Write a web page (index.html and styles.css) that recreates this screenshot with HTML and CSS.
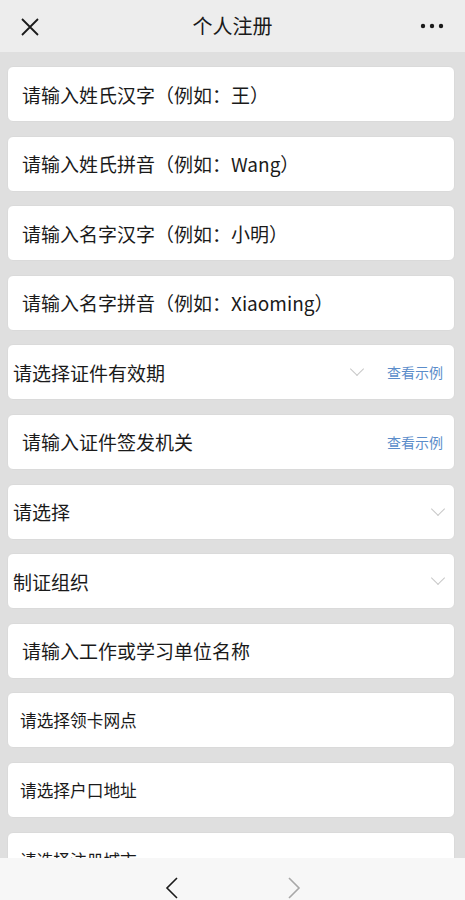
FILE: index.html
```html
<!DOCTYPE html>
<html lang="zh-CN">
<head>
    <meta charset="UTF-8">
    <meta name="viewport" content="width=device-width, initial-scale=1.0">
    <title>个人注册</title>
    <link rel="stylesheet" href="styles.css">
</head>
<body>
    <header class="top-bar">
        <span class="top-icon close-icon">
            <svg width="18" height="18" viewBox="0 0 18 18"><path d="M1 1 L17 17 M17 1 L1 17" stroke="#1a1a1a" stroke-width="1.8" fill="none"/></svg>
        </span>
        <h1 class="page-title">个人注册</h1>
        <span class="top-icon more-icon">
            <svg width="24" height="6" viewBox="0 0 24 6"><circle cx="3" cy="3" r="2.2" fill="#1a1a1a"/><circle cx="12" cy="3" r="2.2" fill="#1a1a1a"/><circle cx="21" cy="3" r="2.2" fill="#1a1a1a"/></svg>
        </span>
    </header>

    <main class="form-list">
        <div class="field"><span class="field-text">请输入姓氏汉字（例如：王）</span></div>
        <div class="field"><span class="field-text">请输入姓氏拼音（例如：Wang）</span></div>
        <div class="field"><span class="field-text">请输入名字汉字（例如：小明）</span></div>
        <div class="field"><span class="field-text">请输入名字拼音（例如：Xiaoming）</span></div>

        <div class="field select">
            <span class="field-text">请选择证件有效期</span>
            <span class="chevron chevron-mid"></span>
            <a class="example-link">查看示例</a>
        </div>
        <div class="field">
            <span class="field-text">请输入证件签发机关</span>
            <a class="example-link">查看示例</a>
        </div>

        <div class="field select">
            <span class="field-text">请选择</span>
            <span class="chevron"></span>
        </div>
        <div class="field select">
            <span class="field-text">制证组织</span>
            <span class="chevron"></span>
        </div>

        <div class="field"><span class="field-text">请输入工作或学习单位名称</span></div>
        <div class="field small"><span class="field-text">请选择领卡网点</span></div>
        <div class="field small"><span class="field-text">请选择户口地址</span></div>
        <div class="field small"><span class="field-text">请选择注册城市</span></div>
    </main>

    <footer class="bottom-bar">
        <svg class="nav-arrow" width="14" height="22" viewBox="0 0 14 22"><path d="M12 1 L2 11 L12 21" stroke="#1a1a1a" stroke-width="1.6" fill="none"/></svg>
        <svg class="nav-arrow" width="14" height="22" viewBox="0 0 14 22"><path d="M2 1 L12 11 L2 21" stroke="#a8a8a8" stroke-width="1.6" fill="none"/></svg>
    </footer>
</body>
</html>
```

FILE: styles.css
```css
* {
    margin: 0;
    padding: 0;
    box-sizing: border-box;
}

body {
    background-color: #dfdfdf;
    color: #1a1a1a;
    font-family: "Noto Sans CJK SC", "Noto Sans", sans-serif;
    width: 465px;
    overflow: hidden;
}

.top-bar {
    height: 52px;
    background-color: #ededed;
    display: flex;
    align-items: center;
    justify-content: space-between;
    padding: 0 21px 0 21px;
}

.top-icon {
    display: flex;
    align-items: center;
    width: 24px;
}

.close-icon svg {
    margin-top: 2px;
}

.page-title {
    font-size: 20px;
    font-weight: normal;
    line-height: 1;
}

.form-list {
    display: flex;
    flex-direction: column;
    gap: 13.6px;
    padding: 14px 10px 60px 7px;
}

.field {
    height: 56px;
    background-color: #fff;
    border: 1px solid #dadada;
    border-radius: 6px;
    display: flex;
    align-items: center;
    padding: 0 11px 0 14px;
    font-size: 19px;
}

.field.select {
    padding-left: 5px;
}

.field.small {
    font-size: 16.7px;
    padding-left: 12px;
}

.field-text {
    flex: 1;
    white-space: nowrap;
}

.chevron {
    width: 10px;
    height: 10px;
    border-right: 1.5px solid #c8c8c8;
    border-bottom: 1.5px solid #c8c8c8;
    transform: rotate(45deg);
    margin: -6px 0 0 0;
}

.chevron-mid {
    margin-right: 25px;
}

.example-link {
    font-size: 14px;
    color: #5b8dca;
}

.bottom-bar {
    position: fixed;
    left: 0;
    bottom: 0;
    width: 465px;
    height: 42px;
    background-color: #f7f7f7;
    display: flex;
    justify-content: center;
    align-items: flex-end;
    gap: 108px;
    padding-bottom: 1px;
}
```
